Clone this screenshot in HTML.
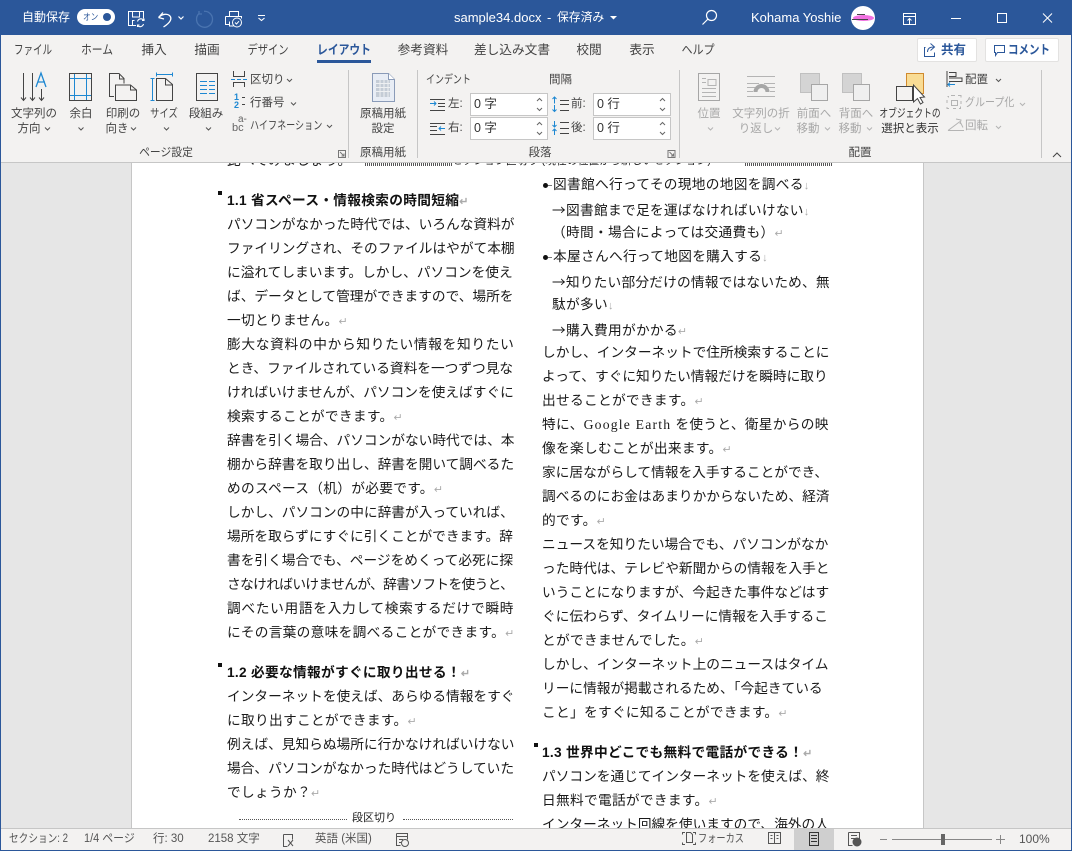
<!DOCTYPE html>
<html lang="ja"><head><meta charset="utf-8"><style>
html,body{margin:0;padding:0}
body{width:1072px;height:851px;overflow:hidden;position:relative;background:#e6e6e6;font-family:"Liberation Sans","Noto Sans CJK JP",sans-serif;color:#444}
.a{position:absolute;white-space:nowrap}
.r{font-size:11.500px;line-height:16px;transform-origin:left center}
.t{position:absolute;white-space:nowrap;font-size:11.500px;line-height:16px;color:#444;transform:translateX(-50%) scaleX(var(--s,1));text-align:center}
.m{font-size:12.700px}
.g{color:#a8a8a8}
.w{color:#fff}
.l{position:absolute;white-space:nowrap;font-size:13.700px;line-height:24px;height:24px;color:#1a1a1a;font-weight:400;letter-spacing:.3px;margin-top:1px}
.c20{letter-spacing:.69px}
.c21{letter-spacing:0}
.c22{letter-spacing:-.62px}
.b{font-weight:700;color:#111}
.p{color:#aaa;font-size:11px;letter-spacing:0}
.ar{font-family:"Noto Sans CJK JP",sans-serif}
svg{position:absolute;overflow:visible}
.sp{position:absolute;background:#fff;border:1px solid #c6c6c6;box-sizing:border-box;width:78px;height:23px;font-size:12.500px;line-height:21px;color:#333;padding-left:3px}
.v{position:absolute;width:1px;background:#c6c6c6;top:70px;height:88px}
.dots{position:absolute;height:0;border-top:1px dotted #555}
.st{position:absolute;white-space:nowrap;font-size:11.500px;line-height:16px;color:#555;top:831px;transform-origin:left center}
</style></head><body>
<!-- title bar -->
<div class="a" style="left:0;top:0;width:1072px;height:35px;background:#2b579a"></div>
<div class="a w" style="left:22px;top:9px;font-size:12px;line-height:17px">自動保存</div>
<div class="a" style="left:77px;top:9px;width:38px;height:16px;background:#fff;border-radius:8px"></div>
<div class="a" style="left:83px;top:11px;font-size:9px;line-height:12px;color:#2b579a;transform:scaleX(.85);transform-origin:left">オン</div>
<div class="a" style="left:103px;top:13px;width:8px;height:8px;background:#2b579a;border-radius:50%"></div>
<svg style="left:0;top:0" width="300" height="35" fill="none" stroke="#fff" stroke-width="1">
<path d="M136 25.500h-7.500v-14h15v7M132.500 12v5h7v-5M132.500 25v-4.500h2"/><path d="M137.500 21.500a3.500 3.500 0 0 1 6-1.500M144 18.500v2h-2M143.500 24a3.500 3.500 0 0 1-6 1.500M137.500 27v-2h2" stroke-width="1.100"/>
<path d="M158.500 17.500l4.500-5M158.500 17.500l5.500 1.500M158.500 17.500c3-3 8-4.500 11-2 3 3 1 7-6 11.500" stroke-width="1.300"/><path d="M178.500 16.500l2.500 2.500 2.500-2.500" stroke-width="1.200"/>
<path d="M199 13.500a8 8 0 1 0 5 -2.200M199 11v3h3" stroke="#4a74b0" stroke-width="1.300"/>
<path d="M229.500 16.500v-5h9v5M225.500 16.500h16v2M225.500 16.500v8h3.500M229.500 21.500v4.500h4"/><circle cx="237" cy="22.500" r="4.500" fill="#2b579a"/><path d="M235 22.500l1.500 1.500 2.500-2.800"/>
<path d="M258 15.500h7M258.500 18l3 2.500 3-2.500" stroke-width="1.100"/>
</svg>
<div class="a w" style="left:454px;top:9px;font-size:13px;line-height:17px">sample34.docx</div>
<div class="a w" style="left:547px;top:9px;font-size:13px;line-height:17px">-</div>
<div class="a w" style="left:557px;top:9px;font-size:11.800px;line-height:17px">保存済み</div>
<svg style="left:610px;top:16px" width="8" height="5"><path d="M0 0h7l-3.500 3.500z" fill="#fff"/></svg>
<svg style="left:700px;top:8px" width="20" height="20" fill="none" stroke="#fff" stroke-width="1.200"><circle cx="11.500" cy="7.500" r="5"/><path d="M8 11l-5.500 5.500"/></svg>
<div class="a w" style="left:751px;top:9px;font-size:13px;line-height:17px">Kohama Yoshie</div>
<div class="a" style="left:851px;top:6px;width:24px;height:24px;background:#fff;border-radius:50%"></div>
<div class="a" style="left:853px;top:15px;width:21px;height:6px;background:#f070e0;border-radius:50%"></div>
<div class="a" style="left:852px;top:19px;width:16px;height:1px;background:#444"></div>
<div class="a" style="left:857px;top:14px;width:8px;height:1px;background:#444"></div>
<svg style="left:900px;top:10px" width="172" height="20" fill="none" stroke="#fff" stroke-width="1"><path d="M3.500 3.500h12v11h-12zM3.500 6.500h12M9.500 14v-5M7.500 10.500l2-2 2 2"/><path d="M51 8.500h10M97.500 3.500h9v9h-9zM143 3.500l9 9M152 3.500l-9 9"/></svg>
<!-- ribbon -->
<div class="a" style="left:1px;top:35px;width:1070px;height:127px;background:#f3f2f1"></div>
<div class="a" style="left:0;top:162px;width:1072px;height:1px;background:#c6c6c6"></div>
<div class="a" style="left:0;top:35px;width:1px;height:816px;background:#2b579a"></div>
<div class="a" style="left:1071px;top:35px;width:1px;height:816px;background:#2b579a"></div>
<div class="t m" style="left:33px;top:42px;--s:.75">ファイル</div>
<div class="t m" style="left:97px;top:42px;--s:.85">ホーム</div>
<div class="t m" style="left:154px;top:42px">挿入</div>
<div class="t m" style="left:207px;top:42px">描画</div>
<div class="t m" style="left:268px;top:42px;--s:.81">デザイン</div>
<div class="t m" style="left:344px;top:42px;font-weight:700;color:#2b579a;--s:.85">レイアウト</div>
<div class="a" style="left:317px;top:60px;width:54px;height:3px;background:#2b579a"></div>
<div class="t m" style="left:423px;top:42px">参考資料</div>
<div class="t m" style="left:512px;top:42px">差し込み文書</div>
<div class="t m" style="left:589px;top:42px">校閲</div>
<div class="t m" style="left:642px;top:42px">表示</div>
<div class="t m" style="left:698px;top:42px;--s:.87">ヘルプ</div>
<div class="a" style="left:917px;top:38px;width:60px;height:24px;background:#fff;border:1px solid #e3e2e1;box-sizing:border-box;border-radius:2px"></div>
<div class="a" style="left:985px;top:38px;width:74px;height:24px;background:#fff;border:1px solid #e3e2e1;box-sizing:border-box;border-radius:2px"></div>
<div class="a" style="left:941px;top:42px;font-size:12.500px;line-height:17px;font-weight:700;color:#2b579a">共有</div>
<div class="a" style="left:1008px;top:42px;font-size:12.500px;line-height:17px;font-weight:700;color:#2b579a;transform:scaleX(.84);transform-origin:left">コメント</div>
<svg style="left:920px;top:40px" width="100" height="20" fill="none" stroke="#2b579a" stroke-width="1"><path d="M5.500 7.500h-1v9h10v-4M7.500 12c0-4 3-5 6-5M10.500 3.500l4 3.500-4 3.500"/><path d="M74.500 5.500h10v7h-7l-2 3v-3h-1z"/></svg>
<!-- icons -->
<svg style="left:0;top:63px" width="1072" height="80" fill="none" stroke="#444" stroke-width="1">
<path d="M23.500 10v27M21 34.500l2.500 3 2.500-3M32.500 10v27M30 34.500l2.500 3 2.500-3M41.500 26v11M39 34.500l2.500 3 2.500-3"/>
<path d="M36 24l5-14 5 14M38 19h7" stroke="#1e88d2" stroke-width="1.300"/>
<rect x="69.500" y="10.500" width="22" height="27"/><path d="M74.500 11v26M86.500 11v26M70 15.500h21M70 32.500h21" stroke="#1e88d2"/>
<path d="M114 33.500h-4.500v-23h9.500l5 5v5M119.500 11v5h5"/><path d="M115.500 37.500v-15.500h15l6 5v10.500zM130.500 22v5h6" fill="#f3f2f1"/>
<path d="M157 11.500h15M156.500 9.500v4M172.500 9.500v4M152.500 16v21M150.500 15.500h4M150.500 37.500h4" stroke="#1e88d2"/><path d="M156.500 37.500v-22h9l7 6v16z M165.500 16v6h7"/>
<rect x="196.500" y="10.500" width="21" height="27"/><path d="M200 18.500h7M209 18.500h6M200 22.500h7M209 22.500h6M200 26.500h7M209 26.500h6M200 30.500h7M209 30.500h6" stroke="#1e88d2"/>
<path d="M233.500 8v5.500h11v-5.500M233.500 24v-4.500h11v4.500"/><path d="M231 16.500h17" stroke="#1e88d2" stroke-dasharray="4 2"/>
<path d="M242 34.500h3M242 41.500h3"/>
<path d="M372.500 10.500h16l6 6v22h-22z" fill="#e8edf5" stroke="#8a9bb8"/><path d="M376 17h14v17h-14z" fill="#c4ccd6" stroke="none"/><path d="M376 20.500h14M376 24.500h14M376 28.500h14M380 17v17M384 17v17M388 17v17" stroke="#eef0f2"/><path d="M388.500 10.500v6h6" fill="#fff" stroke="#8a9bb8"/>
<path d="M698.500 10.500h21v27h-21z" stroke="#a6a6a6"/><path d="M708 16.500h8v6h-8zM702 15.500h4M702 19.500h4M702 25.500h14M702 29.500h14M702 33.500h14" stroke="#b4b4b4"/>
<path d="M747 13.500h28M747 20.500h12M764 20.500h11M747 24.500h8M768 24.500h7M747 28.500h6M770 28.500h5M747 33.500h28" stroke="#b4b4b4"/><path d="M755.500 29a6 6 0 0 1 12 0" stroke="#a6a6a6" stroke-width="4"/>
<rect x="800.500" y="10.500" width="19" height="19" fill="#d4d4d4" stroke="#c0c0c0"/><rect x="811.500" y="21.500" width="16" height="16" fill="#efefef" stroke="#a6a6a6"/>
<rect x="842.500" y="10.500" width="19" height="19" fill="#d4d4d4" stroke="#c0c0c0"/><rect x="853.500" y="21.500" width="16" height="16" fill="#efefef" stroke="#a6a6a6"/>
<rect x="906.500" y="10.500" width="17" height="20" fill="#f9dc94" stroke="#d08a2e"/><rect x="896.500" y="23.500" width="16" height="14" fill="#f3f2f1" stroke="#444"/><path d="M913.500 22v17l4-3.500 3 5.500 2.500-1.500-3-5 4.500-.5z" fill="#fff" stroke="#444"/>
<path d="M947 8v16M949 9.500h7v4h-7M949 15h13v3.500h-13" /><path d="M955 21.500h-7M950 19.500l-2 2 2 2" stroke="#1e88d2"/>
<path d="M948.500 34.500v-1h-1M951 32.500h4M958 32.500h3v2M947 37v3M947 44v1.500h2M953 45.500h3M959 45.500h1.500v-2M961 38v3M951.500 37.500h6v5h-6z" stroke="#b4b4b4"/>
<path d="M948 67.500h16M948 67.500l12-9M960 58.500l3 6M956 56l5 1-1 4" stroke="#b4b4b4"/>
</svg>
<svg style="left:0;top:0" width="1072" height="160" fill="none" stroke="#555" stroke-width="1">
<!-- indent/spacing icons -->
<path d="M430 99.500h15M438 103.500h7M438 106.500h7M430 110.500h15M430 123.500h15M430 126.500h7M430 130.500h7M430 134.500h15" stroke="#444"/>
<path d="M430 103.500h6M434 101.500l2 2-2 2" stroke="#1e88d2"/>
<path d="M445 128.500h-6M441 126.500l-2 2 2 2" stroke="#1e88d2"/>
<path d="M554.500 97v6.500M552.500 99l2-2 2 2M554.500 105v6.500M552.500 109.500l2 2 2-2M554.500 121v6M552.500 125l2 2 2-2M554.500 129v6M552.500 131l2-2 2 2" stroke="#1e88d2"/>
<path d="M560 100.500h9M560 104.500h9M560 110.500h9M560 122.500h9M560 128.500h9M560 133.500h9" stroke="#444"/>
<path d="M45 127.500l2.500 2.500 2.500-2.500M78.500 127.500l2.500 2.500 2.500-2.500M131 127.500l2.500 2.500 2.500-2.500M164 127.500l2.500 2.500 2.500-2.500M206 127.500l2.500 2.500 2.500-2.500M287 79l2.500 2.500 2.500-2.500M291 102.500l2.500 2.500 2.500-2.500M327 125l2.500 2.500 2.500-2.500M996 79l2.500 2.500 2.500-2.500"/>
<path d="M708 127.500l2.500 2.500 2.500-2.500M775 127.500l2.500 2.500 2.500-2.500M825 127.500l2.500 2.500 2.500-2.500M867 127.500l2.500 2.500 2.500-2.500M1020 103l2.500 2.500 2.500-2.500M996 126l2.500 2.500 2.500-2.500" stroke="#b4b4b4"/>
<path d="M338.500 150.500h7v7h-7zM340 152l4 4M344 153.500v2.500h-2.500" stroke="#777"/>
<path d="M668 150.500h7v7h-7zM669.500 152l4 4M673.500 153.500v2.500h-2.500" stroke="#777"/>
<path d="M1053 157l4-4 4 4" stroke="#444"/>
</svg>
<div class="a" style="left:234px;top:92px;font-size:9px;line-height:10px;color:#1e88d2;font-weight:700">1</div>
<div class="a" style="left:234px;top:100px;font-size:9px;line-height:10px;color:#1e88d2;font-weight:700">2</div>
<div class="a" style="left:238px;top:115px;font-size:10px;line-height:10px;color:#666">a-</div>
<div class="a" style="left:232px;top:123px;font-size:11px;line-height:11px;color:#666">bc</div>
<div class="t" style="left:34px;top:106px">文字列の</div><div class="t" style="left:29px;top:121px">方向</div>
<div class="t" style="left:81px;top:106px">余白</div>
<div class="t" style="left:123px;top:106px">印刷の</div><div class="t" style="left:117px;top:121px">向き</div>
<div class="t" style="left:164px;top:106px;--s:.81">サイズ</div>
<div class="t" style="left:206px;top:106px">段組み</div>
<div class="a r" style="left:250px;top:72px">区切り</div>
<div class="a r" style="left:250px;top:95px">行番号</div>
<div class="a r" style="left:250px;top:118px;transform:scaleX(.79)">ハイフネーション</div>
<div class="t" style="left:166px;top:145px;--s:.94">ページ設定</div>
<div class="v" style="left:348px"></div>
<div class="t" style="left:383px;top:106px">原稿用紙</div><div class="t" style="left:383px;top:121px">設定</div>
<div class="t" style="left:383px;top:145px">原稿用紙</div>
<div class="v" style="left:417px"></div>
<div class="a r" style="left:426px;top:72px;transform:scaleX(.78)">インデント</div>
<div class="a r" style="left:549px;top:72px">間隔</div>
<div class="a r" style="left:448px;top:96px">左:</div>
<div class="a r" style="left:448px;top:120px">右:</div>
<div class="a r" style="left:571px;top:96px">前:</div>
<div class="a r" style="left:571px;top:120px">後:</div>
<div class="sp" style="left:470px;top:93px">0 字</div>
<div class="sp" style="left:470px;top:117px">0 字</div>
<div class="sp" style="left:593px;top:93px">0 行</div>
<div class="sp" style="left:593px;top:117px">0 行</div>
<svg style="left:0;top:0" width="700" height="150" fill="none" stroke="#666" stroke-width="1"><path d="M537 101l2.500-2.500 2.500 2.500M537 108l2.500 2.500 2.500-2.500M537 125l2.500-2.500 2.500 2.500M537 132l2.500 2.500 2.500-2.500M660 101l2.500-2.500 2.500 2.500M660 108l2.500 2.500 2.500-2.500M660 125l2.500-2.500 2.500 2.500M660 132l2.500 2.500 2.500-2.500"/></svg>
<div class="t" style="left:540px;top:145px">段落</div>
<div class="v" style="left:679px"></div>
<div class="t g" style="left:709px;top:106px">位置</div>
<div class="t g" style="left:761px;top:106px">文字列の折</div><div class="t g" style="left:756px;top:121px">り返し</div>
<div class="t g" style="left:814px;top:106px">前面へ</div><div class="t g" style="left:808px;top:121px">移動</div>
<div class="t g" style="left:856px;top:106px">背面へ</div><div class="t g" style="left:850px;top:121px">移動</div>
<div class="t" style="left:910px;top:106px;color:#333;--s:.76">オブジェクトの</div><div class="t" style="left:910px;top:121px;color:#333">選択と表示</div>
<div class="a r" style="left:965px;top:72px">配置</div>
<div class="a r g" style="left:965px;top:95px;transform:scaleX(.87)">グループ化</div>
<div class="a r g" style="left:965px;top:118px">回転</div>
<div class="t" style="left:860px;top:145px">配置</div>
<div class="v" style="left:1041px"></div>
<!-- doc area -->
<div class="a" style="left:1px;top:163px;width:1070px;height:665px;background:#e6e6e6"></div>
<div class="a" style="left:131px;top:163px;width:793px;height:665px;background:#fff;border-left:1px solid #c6c6c6;border-right:1px solid #c6c6c6;box-sizing:border-box"></div>
<div class="a" style="left:132px;top:163px;width:790px;height:6px;overflow:hidden">
<div class="l" style="left:95px;top:-15px">比べてみましょう。</div>
<div class="l" style="left:320px;top:-15px;font-size:10.500px">セクション区切り (現在の位置から新しいセクション)</div>
</div>
<div class="a" style="left:365px;top:163px;width:87px;height:3px;background:repeating-linear-gradient(90deg,#555 0 1px,#fff 1px 2px)"></div>
<div class="a" style="left:745px;top:163px;width:87px;height:3px;background:repeating-linear-gradient(90deg,#555 0 1px,#fff 1px 2px)"></div>
<!-- left col -->
<div class="a" style="left:218px;top:191px;width:4px;height:4px;background:#111"></div>
<div class="l b" style="left:227px;top:188px">1.1 省スペース・情報検索の時間短縮<span class="p">↵</span></div>
<div class="l c21" style="left:227px;top:212px">パソコンがなかった時代では、いろんな資料が</div>
<div class="l c21" style="left:227px;top:236px">ファイリングされ、そのファイルはやがて本棚</div>
<div class="l c21" style="left:227px;top:260px">に溢れてしまいます。しかし、パソコンを使え</div>
<div class="l c21" style="left:227px;top:284px">ば、データとして管理ができますので、場所を</div>
<div class="l" style="left:227px;top:308px">一切とりません。<span class="p">↵</span></div>
<div class="l c20" style="left:227px;top:332px">膨大な資料の中から知りたい情報を知りたい</div>
<div class="l c21" style="left:227px;top:356px">とき、ファイルされている資料を一つずつ見な</div>
<div class="l c21" style="left:227px;top:380px">ければいけませんが、パソコンを使えばすぐに</div>
<div class="l" style="left:227px;top:404px">検索することができます。<span class="p">↵</span></div>
<div class="l c21" style="left:227px;top:428px">辞書を引く場合、パソコンがない時代では、本</div>
<div class="l c21" style="left:227px;top:452px">棚から辞書を取り出し、辞書を開いて調べるた</div>
<div class="l" style="left:227px;top:476px">めのスペース（机）が必要です。<span class="p">↵</span></div>
<div class="l c21" style="left:227px;top:500px">しかし、パソコンの中に辞書が入っていれば、</div>
<div class="l c21" style="left:227px;top:524px">場所を取らずにすぐに引くことができます。辞</div>
<div class="l c21" style="left:227px;top:548px">書を引く場合でも、ページをめくって必死に探</div>
<div class="l c22" style="left:227px;top:572px">さなければいけませんが、辞書ソフトを使うと、</div>
<div class="l c20" style="left:227px;top:596px">調べたい用語を入力して検索するだけで瞬時</div>
<div class="l" style="left:227px;top:620px">にその言葉の意味を調べることができます。<span class="p">↵</span></div>
<div class="a" style="left:218px;top:663px;width:4px;height:4px;background:#111"></div>
<div class="l b" style="left:227px;top:660px">1.2 必要な情報がすぐに取り出せる！<span class="p">↵</span></div>
<div class="l c21" style="left:227px;top:684px">インターネットを使えば、あらゆる情報をすぐ</div>
<div class="l" style="left:227px;top:708px">に取り出すことができます。<span class="p">↵</span></div>
<div class="l c21" style="left:227px;top:732px">例えば、見知らぬ場所に行かなければいけない</div>
<div class="l c21" style="left:227px;top:756px">場合、パソコンがなかった時代はどうしていた</div>
<div class="l" style="left:227px;top:780px">でしょうか？<span class="p">↵</span></div>
<div class="dots" style="left:239px;top:819px;width:108px"></div>
<div class="a" style="left:352px;top:810px;font-size:11px;line-height:16px;color:#222">段区切り</div>
<div class="dots" style="left:403px;top:819px;width:110px"></div>
<!-- right col -->
<div class="a" style="left:543px;top:183px;width:5px;height:5px;border-radius:50%;background:#111"></div>
<div class="a" style="left:548px;top:185px;width:4px;height:1px;background:#777"></div>
<div class="l" style="left:553px;top:172px">図書館へ行ってその現地の地図を調べる<span class="p">↓</span></div>
<div class="l" style="left:552px;top:196px"><span class="ar">→</span>図書館まで足を運ばなければいけない<span class="p">↓</span></div>
<div class="l" style="left:552px;top:220px">（時間・場合によっては交通費も）<span class="p">↵</span></div>
<div class="a" style="left:543px;top:255px;width:5px;height:5px;border-radius:50%;background:#111"></div>
<div class="a" style="left:548px;top:257px;width:4px;height:1px;background:#777"></div>
<div class="l" style="left:553px;top:244px">本屋さんへ行って地図を購入する<span class="p">↓</span></div>
<div class="l" style="left:552px;top:268px;letter-spacing:.2px"><span class="ar">→</span>知りたい部分だけの情報ではないため、無</div>
<div class="l" style="left:552px;top:292px">駄が多い<span class="p">↓</span></div>
<div class="l" style="left:552px;top:316px"><span class="ar">→</span>購入費用がかかる<span class="p">↵</span></div>
<div class="l c21" style="left:542px;top:340px">しかし、インターネットで住所検索することに</div>
<div class="l c21" style="left:542px;top:364px">よって、すぐに知りたい情報だけを瞬時に取り</div>
<div class="l" style="left:542px;top:388px">出せることができます。<span class="p">↵</span></div>
<div class="l" style="left:542px;top:412px">特に、<span style="font-family:'Liberation Serif',serif;letter-spacing:1.2px">Google Earth</span> を使うと、衛星からの映</div>
<div class="l" style="left:542px;top:436px">像を楽しむことが出来ます。<span class="p">↵</span></div>
<div class="l c21" style="left:542px;top:460px">家に居ながらして情報を入手することができ、</div>
<div class="l c21" style="left:542px;top:484px">調べるのにお金はあまりかからないため、経済</div>
<div class="l" style="left:542px;top:508px">的です。<span class="p">↵</span></div>
<div class="l c21" style="left:542px;top:532px">ニュースを知りたい場合でも、パソコンがなか</div>
<div class="l c21" style="left:542px;top:556px">った時代は、テレビや新聞からの情報を入手と</div>
<div class="l c21" style="left:542px;top:580px">いうことになりますが、今起きた事件などはす</div>
<div class="l c21" style="left:542px;top:604px">ぐに伝わらず、タイムリーに情報を入手するこ</div>
<div class="l" style="left:542px;top:628px">とができませんでした。<span class="p">↵</span></div>
<div class="l c21" style="left:542px;top:652px">しかし、インターネット上のニュースはタイム</div>
<div class="l c21" style="left:542px;top:676px">リーに情報が掲載されるため、「今起きている</div>
<div class="l" style="left:542px;top:700px">こと」をすぐに知ることができます。<span class="p">↵</span></div>
<div class="a" style="left:534px;top:743px;width:4px;height:4px;background:#111"></div>
<div class="l b" style="left:542px;top:740px">1.3 世界中どこでも無料で電話ができる！<span class="p">↵</span></div>
<div class="l c21" style="left:542px;top:764px">パソコンを通じてインターネットを使えば、終</div>
<div class="l" style="left:542px;top:788px">日無料で電話ができます。<span class="p">↵</span></div>
<div class="a" style="left:542px;top:808px;width:288px;height:20px;overflow:hidden"><div class="l c21" style="left:0;top:4px">インターネット回線を使いますので、海外の人</div></div>
<!-- status bar -->
<div class="a" style="left:1px;top:828px;width:1070px;height:22px;background:#f3f2f1;border-top:1px solid #c6c6c6;box-sizing:border-box"></div>
<div class="a" style="left:0;top:850px;width:1072px;height:1px;background:#2b579a"></div>
<div class="st" style="left:9px;transform:scaleX(.84)">セクション: 2</div>
<div class="st" style="left:84px;transform:scaleX(.95)">1/4 ページ</div>
<div class="st" style="left:153px">行: 30</div>
<div class="st" style="left:208px">2158 文字</div>
<div class="st" style="left:315px">英語 (米国)</div>
<div class="st" style="left:698px;transform:scaleX(.8)">フォーカス</div>
<div class="a" style="left:794px;top:829px;width:40px;height:21px;background:#cfcfcf"></div>
<div class="st" style="left:1019px;font-size:12px">100%</div>
<svg style="left:0;top:828px" width="1072" height="22" fill="none" stroke="#555" stroke-width="1">
<path d="M283.500 6.500h9v5M283.500 6.500v12h4M288 12l5 6M293 12l-5 6"/>
<path d="M396.500 5.500h11v6M396.500 5.500v12h4M396.500 8.500h11M399 11.500h4M399 14.500h2"/><circle cx="405" cy="15" r="3.500"/>
<path d="M685 4.500h-2.500v2M682.500 14.500v2h2.500M693 4.500h2.500v2M695.500 14.500v2h-2.500M686.500 14.500v-10h4l2 2v8z"/>
<path d="M768.500 4.500h12v11h-12zM774.500 4.500v11M770.500 7.500h2M770.500 10.500h2M776.500 7.500h2M776.500 10.500h2"/>
<path d="M809.500 4.500h9v13h-9zM811 7.500h6M811 10.500h6M811 13.500h6" stroke="#333"/>
<path d="M848.500 4.500h11v7M848.500 4.500v13h4M851 7.500h6M851 10.500h4"/><circle cx="857" cy="14" r="4" fill="#555"/>
<path d="M880 11.500h7M996 11.500h9M1000.500 7v9M892 11.500h100" stroke="#888"/>
</svg>
<div class="a" style="left:941px;top:834px;width:4px;height:11px;background:#666"></div>
</body></html>
